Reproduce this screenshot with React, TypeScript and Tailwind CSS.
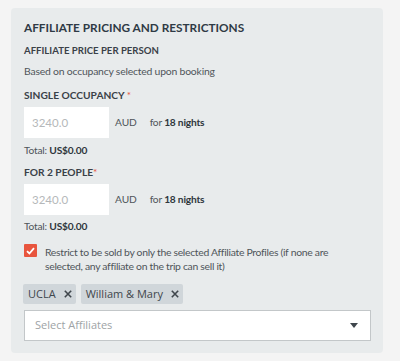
import React from "react";

const PriceRow = () => (
  <div className="flex items-center mt-[5px]">
    <div className="w-[85px] h-[31px] bg-white flex items-center pl-[8px] text-[11.5px] text-[#b5b8ba]">3240.0</div>
    <span className="ml-[6px] text-[10.2px] tracking-[-0.1px] text-[#4f555a]">AUD</span>
    <span className="ml-[13px] text-[10.2px] tracking-[-0.2px] text-[#4f555a]">
      for <span className="font-bold text-[#2f363c]">18 nights</span>
    </span>
  </div>
);

const Total = ({ mt }: { mt: string }) => (
  <div className={`${mt} text-[10.2px] tracking-[-0.2px] leading-[14px] text-[#4f555a]`}>
    Total: <span className="font-bold text-[#2f363c]">US$0.00</span>
  </div>
);

const Tag = ({ label }: { label: string }) => (
  <div className="h-[20px] bg-[#d0d6da] rounded-[2px] flex items-center pl-[5px] pr-[4px] text-[11px] text-[#3f464c]" style={{ fontFamily: '"Open Sans", sans-serif' }}>
    <span>{label}</span>
    <svg className="ml-[8px]" width="8" height="8" viewBox="0 0 8 8">
      <path d="M0.8 0.8L7.2 7.2M7.2 0.8L0.8 7.2" stroke="#3f464c" strokeWidth="1.6" />
    </svg>
  </div>
);

export default function App() {
  return (
    <div className="w-[400px] h-[361px] bg-[#f4f4f4] pt-[8px] pl-[11px]" style={{ fontFamily: 'Lato, "Open Sans", sans-serif' }}>
      <div className="w-[372px] bg-[#e8ebec] rounded-[4px] pt-[12px] pb-[12px] pl-[13px] pr-[12px]">
        <div className="text-[11.8px] leading-[16px] font-bold text-[#2f3a45]">AFFILIATE PRICING AND RESTRICTIONS</div>
        <div className="mt-[8px] text-[9.6px] leading-[14px] font-bold text-[#3a4148]">AFFILIATE PRICE PER PERSON</div>
        <div className="mt-[6px] text-[10.4px] tracking-[-0.2px] leading-[14px] text-[#4f555a]">Based on occupancy selected upon booking</div>
        <div className="mt-[10px] text-[10.2px] leading-[14px] font-bold text-[#3a4148]">
          SINGLE OCCUPANCY <span className="text-[#e8553e] font-normal">*</span>
        </div>
        <PriceRow />
        <Total mt="mt-[5px]" />
        <div className="mt-[8px] text-[10.2px] leading-[14px] font-bold text-[#3a4148]">
          FOR 2 PEOPLE<span className="text-[#e8553e] font-normal">*</span>
        </div>
        <PriceRow />
        <Total mt="mt-[4px]" />
        <div className="mt-[11px] flex items-start">
          <div className="w-[13px] h-[13px] shrink-0 bg-[#e8553e] rounded-[1px] flex items-center justify-center">
            <svg width="9" height="8" viewBox="0 0 9 8">
              <path d="M1 4.2L3.4 6.5L8 1.2" stroke="white" strokeWidth="1.8" fill="none" />
            </svg>
          </div>
          <div className="ml-[8px] mt-[1px] w-[300px] text-[10.4px] tracking-[-0.3px] leading-[14px] text-[#4f555a]">
            Restrict to be sold by only the selected Affiliate Profiles (if none are selected, any affiliate on the trip can sell it)
          </div>
        </div>
        <div className="mt-[11px] flex gap-[5px] -ml-[1px]">
          <Tag label="UCLA" />
          <Tag label="William & Mary" />
        </div>
        <div className="mt-[6px] h-[31px] bg-white border border-[#c3c7c9] flex items-center justify-between pl-[10px] pr-[12px] text-[11px] text-[#9ea3a6]" style={{ fontFamily: '"Open Sans", sans-serif' }}>
          <span>Select Affiliates</span>
          <svg width="8" height="5" viewBox="0 0 8 5">
            <path d="M0 0H8L4 5Z" fill="#3f464c" />
          </svg>
        </div>
      </div>
    </div>
  );
}
